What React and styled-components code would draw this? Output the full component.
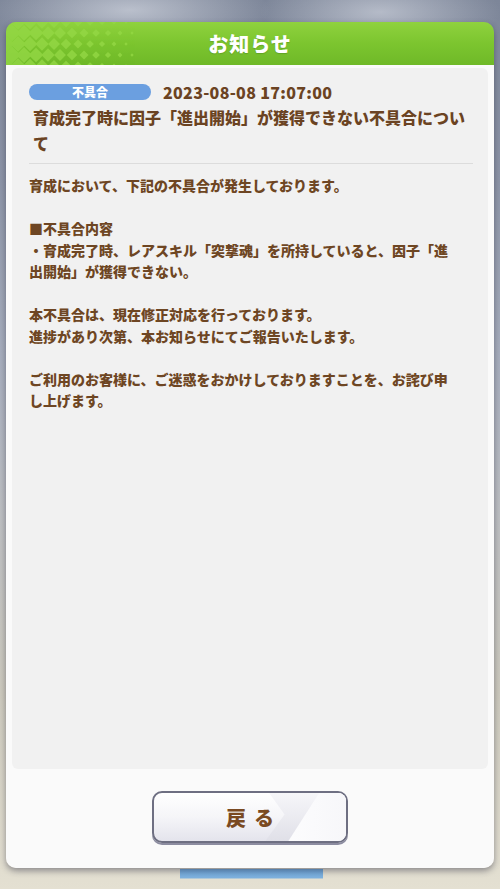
import React from 'react';
import styled, { createGlobalStyle } from 'styled-components';

const GlobalStyle = createGlobalStyle`
  html, body {
    margin: 0;
    padding: 0;
  }
  body {
    font-family: "Noto Sans CJK JP", "Noto Sans", sans-serif;
    background: #c9c8c2;
  }
`;

const notice = {
  tag: '不具合',
  date: '2023-08-08 17:07:00',
  title: '育成完了時に因子「進出開始」が獲得できない不具合について',
  body: [
    ['育成において、下記の不具合が発生しております。'],
    ['■不具合内容', '・育成完了時、レアスキル「突撃魂」を所持していると、因子「進出開始」が獲得できない。'],
    ['本不具合は、現在修正対応を行っております。', '進捗があり次第、本お知らせにてご報告いたします。'],
    ['ご利用のお客様に、ご迷惑をおかけしておりますことを、お詫び申し上げます。'],
  ],
};

const Diamonds = () => {
  const cells = [];
  for (let r = 0; r < 5; r++) {
    for (let c = 0; c < 14; c++) {
      const x = c * 12 + (r % 2 ? 6 : 0);
      const y = r * 11;
      const s = Math.max(0, 6.2 - c * 0.5);
      if (s < 1) continue;
      cells.push(
        <rect
          key={r + '-' + c}
          x={x - s}
          y={y - s}
          width={s * 2}
          height={s * 2}
          transform={`rotate(45 ${x} ${y})`}
        />
      );
    }
  }
  return (
    <DiamondSvg width="170" height="43" viewBox="0 0 170 43">
      <g fill="#94d845" opacity="0.8">{cells}</g>
    </DiamondSvg>
  );
};

const App = () => {
  return (
    <>
      <GlobalStyle />
      <Page>
        <Panel>
          <Header>
            <Diamonds />
            <HeaderTitle>お知らせ</HeaderTitle>
          </Header>
          <Body>
            <Card>
              <MetaRow>
                <Tag>{notice.tag}</Tag>
                <DateText>{notice.date}</DateText>
              </MetaRow>
              <Title>{notice.title}</Title>
              <Divider />
              <Content>
                {notice.body.map((para, i) => (
                  <Paragraph key={i}>
                    {para.map((line, j) => (
                      <div key={j}>{line}</div>
                    ))}
                  </Paragraph>
                ))}
              </Content>
            </Card>
            <Footer>
              <BackButton>
                <ButtonLabel>戻る</ButtonLabel>
              </BackButton>
            </Footer>
          </Body>
        </Panel>
      </Page>
    </>
  );
};

export default App;

const Page = styled.div`
  height: 889px;
  box-sizing: border-box;
  padding: 22px 6px 21px;
  overflow: hidden;
  background:
    linear-gradient(180deg, transparent 869px, #6ca6da 869px, #7fb2de 878px, transparent 879px) 180px 0 / 143px 100% no-repeat,
    radial-gradient(ellipse 140px 40px at 130px 10px, rgba(235, 238, 245, 0.55), transparent 100%),
    radial-gradient(ellipse 120px 40px at 380px 12px, rgba(235, 238, 245, 0.5), transparent 100%),
    linear-gradient(180deg, #7d8699 0%, #8d95a7 20%, #a7aebd 40%, #bdbfc2 58%, #cdcabd 78%, #e4e0d2 100%);
`;

const Panel = styled.div`
  height: 846px;
  display: flex;
  flex-direction: column;
  border-radius: 10px;
  overflow: hidden;
  box-shadow: 0 3px 6px rgba(40, 40, 60, 0.45);
`;

const Header = styled.div`
  position: relative;
  height: 43px;
  flex: 0 0 auto;
  display: flex;
  align-items: center;
  justify-content: center;
  background: linear-gradient(180deg, #8fd23e 0%, #7cc52f 50%, #6fb928 100%);
`;

const DiamondSvg = styled.svg`
  position: absolute;
  left: 0;
  top: 0;
`;

const HeaderTitle = styled.h1`
  position: relative;
  margin: 0;
  font-size: 20px;
  font-weight: 900;
  color: #ffffff;
  letter-spacing: 1px;
  text-shadow: 0 1px 1px rgba(60, 110, 20, 0.35);
`;

const Body = styled.div`
  flex: 1;
  display: flex;
  flex-direction: column;
  background: #fafafa;
  padding: 3px 6px 0;
`;

const Card = styled.div`
  height: 701px;
  box-sizing: border-box;
  background: #f1f1f1;
  border-radius: 6px;
  padding: 16px 16px 0 17px;
  color: #6e4623;
  font-weight: 700;
`;

const MetaRow = styled.div`
  display: flex;
  align-items: center;
  gap: 12px;
  height: 16px;
`;

const Tag = styled.span`
  width: 122px;
  height: 16px;
  border-radius: 8px;
  background: #6b9fe0;
  color: #ffffff;
  font-size: 12px;
  font-weight: 900;
  line-height: 16px;
  text-align: center;
`;

const DateText = styled.span`
  font-size: 16px;
  font-weight: 900;
  color: #6b4322;
  letter-spacing: 0.3px;
`;

const Title = styled.h2`
  margin: 4px 0 0 4px;
  width: 437px;
  font-size: 16px;
  line-height: 26px;
  font-weight: 900;
  color: #6b4322;
`;

const Divider = styled.hr`
  margin: 7px 0 0;
  border: none;
  border-top: 1px solid #dcdcdc;
  width: 444px;
`;

const Content = styled.div`
  margin-top: 11px;
  width: 432px;
  font-size: 14px;
  line-height: 21.5px;
  font-weight: 900;
  display: flex;
  flex-direction: column;
  gap: 21.5px;
`;

const Paragraph = styled.div``;

const Footer = styled.div`
  flex: 1;
  display: flex;
  align-items: center;
  justify-content: center;
  padding-bottom: 3px;
`;

const BackButton = styled.button`
  position: relative;
  width: 196px;
  height: 52px;
  border-radius: 10px;
  border: 2px solid #6e6f82;
  box-shadow: 0 2px 0 #8c8ca0;
  overflow: hidden;
  background: linear-gradient(180deg, #ffffff 0%, #f5f5f8 50%, #e4e4ec 100%);
  padding: 0;
  cursor: pointer;

  &::before {
    content: '';
    position: absolute;
    inset: 0;
    background: linear-gradient(180deg, #f6f6f9 0%, #e0e0e8 100%);
    clip-path: polygon(60% 0, 100% 0, 100% 100%, 58% 100%, 68% 45%);
  }

  &::after {
    content: '';
    position: absolute;
    inset: 0;
    background: linear-gradient(90deg, #ececf1 0%, #ffffff 55%, #f7f7fa 100%);
    clip-path: polygon(86% 0, 100% 0, 100% 100%, 70% 100%);
  }
`;

const ButtonLabel = styled.span`
  position: relative;
  z-index: 1;
  font-family: "Noto Sans CJK JP", sans-serif;
  font-size: 20px;
  font-weight: 900;
  color: #7a4a22;
  letter-spacing: 8px;
  padding-left: 8px;
`;
